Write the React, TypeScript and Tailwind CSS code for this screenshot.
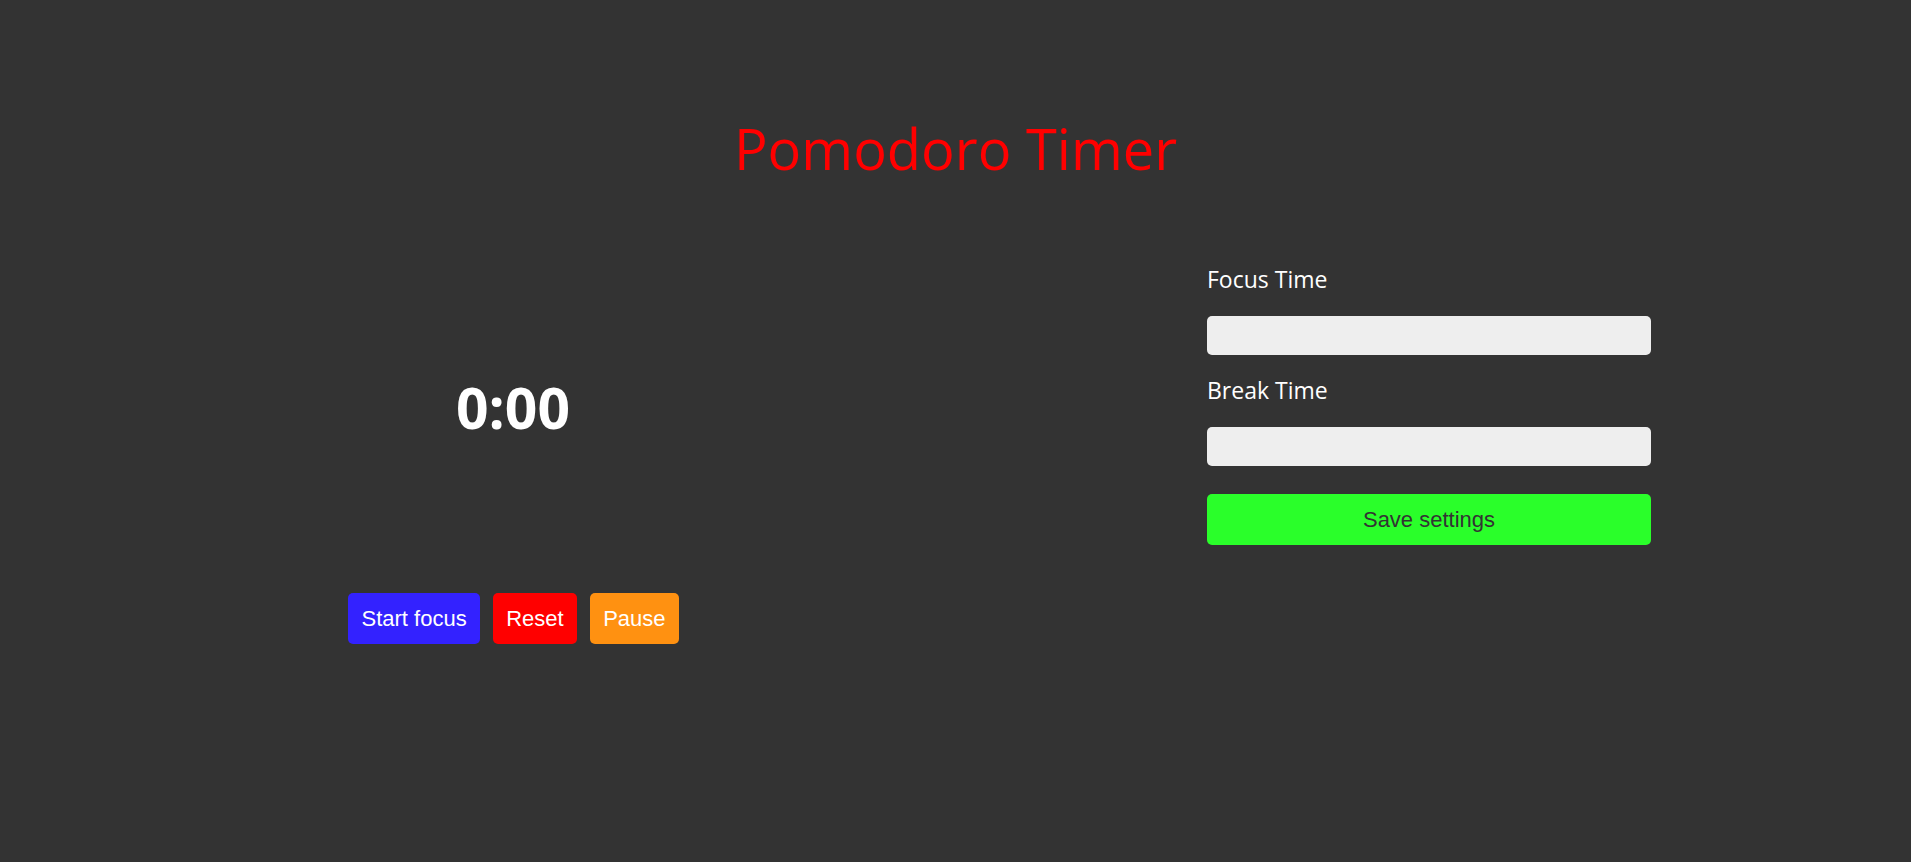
import React, { useEffect, useState } from 'react';

const display = '"Open Sans", "DejaVu Sans", sans-serif';
const arial = '"Liberation Sans", Arial, sans-serif';

const formatTime = (secs: number) => {
  const m = Math.floor(secs / 60);
  const s = secs % 60;
  return `${m}:${s.toString().padStart(2, '0')}`;
};

export default function App() {
  const [focusTime, setFocusTime] = useState('');
  const [breakTime, setBreakTime] = useState('');
  const [seconds, setSeconds] = useState(0);
  const [running, setRunning] = useState(false);

  useEffect(() => {
    if (!running) return;
    const id = setInterval(() => {
      setSeconds((s) => (s > 0 ? s - 1 : 0));
    }, 1000);
    return () => clearInterval(id);
  }, [running]);

  const startFocus = () => {
    const mins = parseInt(focusTime, 10);
    if (!isNaN(mins)) setSeconds(mins * 60);
    setRunning(true);
  };

  return (
    <div className="min-h-screen bg-[#333333] text-white">
      <h1
        className="pt-[110px] text-center text-[56px] leading-[76px] font-normal text-[#ff0000]"
        style={{ fontFamily: display }}
      >
        Pomodoro Timer
      </h1>

      <div className="mt-[78px] flex items-start justify-between pl-[348px] pr-[260px]">
        {/* timer */}
        <div className="flex w-[330px] flex-col items-center">
          <div
            className="mt-[104px] text-[57px] leading-[78px] font-bold"
            style={{ fontFamily: display }}
          >
            {formatTime(seconds)}
          </div>
          <div className="mt-[147px] flex w-full gap-[12.5px] whitespace-nowrap" style={{ fontFamily: arial }}>
            <button
              onClick={startFocus}
              className="shrink-0 rounded-[5px] bg-[#3322ff] px-[13.5px] py-[13px] text-[22px] leading-[25px] text-white"
            >
              Start focus
            </button>
            <button
              onClick={() => {
                setRunning(false);
                setSeconds(0);
              }}
              className="shrink-0 rounded-[5px] bg-[#ff0000] px-[13.5px] py-[13px] text-[22px] leading-[25px] text-white"
            >
              Reset
            </button>
            <button
              onClick={() => setRunning(false)}
              className="shrink-0 rounded-[5px] bg-[#ff9111] px-[13.5px] py-[13px] text-[22px] leading-[25px] text-white"
            >
              Pause
            </button>
          </div>
        </div>

        {/* settings */}
        <div className="flex w-[444px] flex-col">
          <label
            className="text-[23px] leading-[31px] text-white"
            style={{ fontFamily: display }}
          >
            Focus Time
          </label>
          <input
            value={focusTime}
            onChange={(e) => setFocusTime(e.target.value)}
            className="mt-[21px] h-[39px] rounded-[5px] bg-[#eeeeee] px-2 text-[#333333] outline-none"
          />
          <label
            className="mt-[20px] text-[23px] leading-[31px] text-white"
            style={{ fontFamily: display }}
          >
            Break Time
          </label>
          <input
            value={breakTime}
            onChange={(e) => setBreakTime(e.target.value)}
            className="mt-[21px] h-[39px] rounded-[5px] bg-[#eeeeee] px-2 text-[#333333] outline-none"
          />
          <button
            className="mt-[28px] h-[51px] rounded-[5px] bg-[#2aff2a] text-[22px] text-[#333333]"
            style={{ fontFamily: arial }}
          >
            Save settings
          </button>
        </div>
      </div>
    </div>
  );
}
